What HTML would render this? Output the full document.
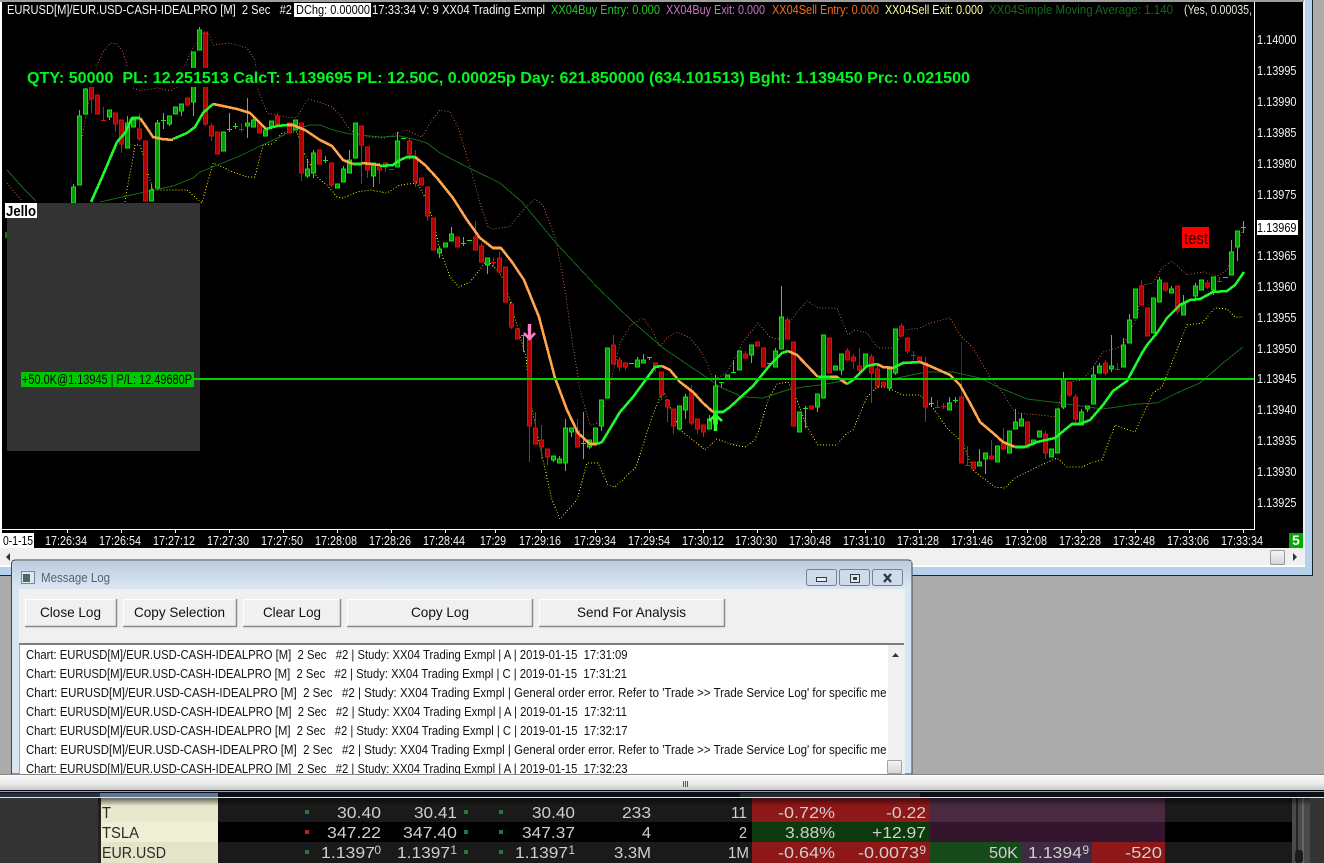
<!DOCTYPE html>
<html><head><meta charset="utf-8"><title>Chart</title>
<style>
html,body{margin:0;padding:0;background:#ababab;width:1324px;height:863px;overflow:hidden}
svg{display:block}
text{font-family:"Liberation Sans",sans-serif;white-space:pre}
.d{fill:none;stroke-width:1;stroke-dasharray:1 2;shape-rendering:crispEdges}
.e{fill:none;stroke-width:2.6;stroke-linejoin:round;shape-rendering:crispEdges}
.c{shape-rendering:crispEdges}
.ax text{fill:#f2f2f2;font-size:13px}
.log text{fill:#111;font-size:13px}
.t text{fill:#cfcfcf;font-size:16px;text-anchor:end}
.t .s{font-size:12px}
</style></head><body>
<svg xmlns="http://www.w3.org/2000/svg" width="1324" height="863" viewBox="0 0 1324 863">
<defs>
<clipPath id="cc"><rect x="2" y="18" width="1252" height="511"/></clipPath>
<clipPath id="lc"><rect x="20" y="646" width="867" height="128"/></clipPath>
<linearGradient id="tb" x1="0" y1="0" x2="0" y2="1"><stop offset="0" stop-color="#bccddf"/><stop offset="1" stop-color="#dce8f4"/></linearGradient>
<linearGradient id="bt" x1="0" y1="0" x2="0" y2="1"><stop offset="0" stop-color="#f6f6f6"/><stop offset="1" stop-color="#d4d4d4"/></linearGradient>
<linearGradient id="hs" x1="0" y1="0" x2="0" y2="1"><stop offset="0" stop-color="#fbfbfb"/><stop offset=".55" stop-color="#ececec"/><stop offset="1" stop-color="#c4c4c4"/></linearGradient>
<linearGradient id="sh" x1="0" y1="0" x2="0" y2="1"><stop offset="0" stop-color="#000" stop-opacity=".55"/><stop offset="1" stop-color="#000" stop-opacity="0"/></linearGradient>
</defs>

<!-- window background -->
<rect width="1324" height="863" fill="#ababab"/>
<rect x="0" y="0" width="1313" height="576" fill="#b5d1ec"/>
<rect x="1312" y="0" width="1" height="576" fill="#222"/>
<rect x="0" y="575" width="1313" height="1" fill="#222"/>
<rect x="0" y="0" width="1305" height="567" fill="#f0f0f0"/>
<rect x="0" y="565" width="1305" height="2" fill="#fff"/>
<rect x="0" y="0" width="1304" height="2" fill="#9e9e9e"/>
<rect x="2" y="2" width="1301" height="546" fill="#000"/>
<rect x="0" y="2" width="2" height="546" fill="#fff"/>

<!-- bottom scroll of chart window -->
<rect x="1270.500" y="550.500" width="14" height="14" fill="url(#bt)" stroke="#9a9a9a" rx="1"/>
<path d="M1293 553l4 4-4 4z" fill="#333"/>
<path d="M10 553l-4 4 4 4z" fill="#333"/>

<!-- chart -->
<g clip-path="url(#cc)">
<g class="d" stroke="#b25c3a">
<polyline points="7,183 21,200"/>
<polyline points="81,145 85,120 90,95 97,66 103,52 110,43 117,44 122,50 127,65 133,88 141,91 150,89 158,88 170,91 177,87 185,65 193,48 203,32 208,32 213,45 230,43 247,48 255,60 258,90 267,113 290,118 297,117 308,99 319,102 332,107 340,115 350,130 365,137 385,138 406,130 422,137 432,120 440,110 450,112 458,127 473,177 480,203 488,227 492,229 500,228 509,227 526,207 535,199 543,205 556,240 565,290 572,340 580,390 590,425 600,423 610,385 620,343 631,325 643,318 652,330 660,347 667,338 677,332 690,338 700,350 707,363 713,380 727,373 743,342 758,323 770,337 778,339 797,312 807,301 818,308 837,308 848,335 855,330 867,333 878,348 893,348 905,330 920,328 930,323 950,318 960,335 973,348 990,377 1003,393 1015,413 1030,414 1057,417 1063,383 1083,380 1093,367 1103,352 1123,346 1137,317 1143,285 1153,283 1162,268 1172,261 1187,275 1203,272 1217,276 1227,270 1235,247 1243,230"/>
</g>
<g class="d" stroke="#e6e600">
<polyline points="125,202 135,145 140,145 150,180 153,190 187,190 202,203 213,163 233,172 247,177 255,177 263,145 273,144 282,133 297,132 305,155 317,177 327,185 337,197 343,198 357,192 370,190 387,193 400,185 417,183 425,197 433,220 440,250 450,277 459,287 470,282 487,260 500,273 505,283 526,357 530,400 543,460 552,500 560,519 577,500 587,463 598,463 608,485 615,487 636,467 652,417 663,390 680,430 693,440 705,450 717,439 730,444 745,447 755,440 760,427 768,400 777,384 788,382 797,400 807,427 818,445 837,445 845,435 853,430 867,397 877,387 887,387 902,395 920,395 933,408 947,428 963,443 973,470 983,478 995,487 1005,488 1015,478 1037,467 1057,458 1067,467 1082,467 1093,462 1102,460 1115,425 1135,432 1153,393 1162,387 1187,325 1202,323 1215,308 1227,309 1235,317 1243,317"/>
</g>
<g fill="none" stroke="#126a18" stroke-width="1" class="c">
<polyline points="7,170 25,190 36,201"/>
<polyline points="100,202 140,193 173,186 193,178 200,172 220,164 240,156 260,146 280,137 293,130 310,125 320,125 333,130 350,134 380,137 400,136 417,140 427,143 440,153 467,167 490,178 500,183 522,202 556,243 597,287 633,322 663,348 703,375 720,387 743,397 763,398 787,390 803,387 820,385 837,382 853,379 887,380 907,376 927,372 953,372 980,378 1000,388 1027,399 1060,403 1103,409 1137,404 1157,403 1177,393 1200,383 1223,363 1243,347"/>
</g>
<!-- wicks -->
<path class="c" fill="none" stroke="#10f010" stroke-width="1" d="M73.5 184V203M79.5 110V185M85.5 88V114M109.5 110V120M127.5 116V148M133.5 118V127M151.5 184V201M157.5 120V188M169.5 116V126M181.5 104V116M193.5 52V116M199.5 27V50M247.5 98V138M253.5 115V127M265.5 127V136M307.5 160V178M313.5 150V178M343.5 166V182M349.5 150V173M373.5 163V187M397.5 132V167M439.5 246V258M451.5 227V241M487.5 258V274M553.5 456V462M559.5 456V463M565.5 419V471M571.5 428V437M589.5 440V449M601.5 400V431M637.5 357V367M643.5 354V363M685.5 394V419M709.5 415V429M715.5 375V430M751.5 345V363M775.5 348V367M781.5 286V349M817.5 394V412M841.5 354V375M865.5 354V367M889.5 366V391M895.5 329V375M949.5 397V410M979.5 449V466M985.5 453V474M1015.5 409V429M1021.5 413V426M1063.5 372V409M1081.5 409V425M1087.5 406V412M1093.5 366V404M1099.5 363V373M1111.5 335V372M1123.5 338V367M1129.5 314V343M1159.5 277V302M1171.5 286V293M1183.5 295V315M1195.5 283V298M1213.5 277V295M1231.5 240V275M1237.5 231V261
M163.5 113V129M161 120.5h5M229.5 113V132M227 129.5h5M235.5 123V129M233 126.5h5M325.5 156V163M323 160.5h5M401 138.5h5M463.5 237V246M461 243.5h5M467 240.5h5M523.5 335V352M521 335.5h5M583.5 412V459M581 443.5h5M629 363.5h5M649.5 357V360M647 357.5h5M721.5 382V387M719 382.5h5M733.5 360V372M731 372.5h5M769.5 363V367M767 363.5h5M805.5 406V428M803 408.5h5M931.5 397V406M929 403.5h5M955.5 397V403M953 400.5h5M1223 277.5h5M1243.5 221V233M1241 227.5h5"/>
<path class="c" fill="none" stroke="#ff0000" stroke-width="1" d="M91.5 87V113M115.5 113V132M121.5 120V153M139.5 113V141M145.5 141V201M205.5 33V126M211.5 123V141M277.5 113V124M301.5 123V181M331.5 163V187M361.5 126V184M367.5 147V178M379.5 163V184M385.5 163V172M409.5 138V160M415.5 150V187M427.5 187V221M475.5 221V250M481.5 243V262M499.5 252V274M511.5 301V329M529.5 338V462M535.5 412V444M541.5 425V459M547.5 449V465M577.5 419V447M613.5 335V364M619.5 357V371M625.5 363V370M655.5 363V372M661.5 372V400M667.5 400V422M673.5 409V434M691.5 385V425M697.5 419V434M703.5 425V437M745.5 351V358M787.5 317V339M847.5 348V360M853.5 354V369M859.5 348V372M871.5 354V403M877.5 366V388M901.5 323V336M907.5 338V354M925.5 357V422M973.5 462V469M991.5 440V459M1003.5 428V449M1027.5 422V449M1045.5 431V459M1069.5 382V397M1075.5 394V422M1105.5 360V375M1141.5 280V305M1165.5 283V292M1177.5 286V314M1207.5 280V289
M103.5 107V120M101 120.5h5M241.5 123V132M239 129.5h5M389 169.5h5M493.5 258V267M491 262.5h5M913.5 351V360M911 355.5h5M937.5 400V407M935 407.5h5M943.5 403V409M941 406.5h5M967.5 446V465M965 465.5h5M1117.5 363V369M1115 369.5h5M1219.5 277V281M1217 281.5h5"/>
<path class="c" fill="none" stroke="#8c1010" stroke-width="1" d="M961.5 342V397"/>
<!-- green bodies -->
<path class="c" fill="#00a000" stroke="#00f000" stroke-width="1" d="M71.5 187h4v16h-4zM77.5 116h4v69h-4zM83.5 89h4v25h-4zM107.5 110h4v7h-4zM125.5 123h4v25h-4zM131.5 120h4v7h-4zM149.5 190h4v11h-4zM155.5 123h4v65h-4zM167.5 116h4v8h-4zM173.5 107h4v7h-4zM179.5 104h4v7h-4zM191.5 52h4v50h-4zM197.5 30h4v20h-4zM221.5 132h4v19h-4zM245.5 123h4v3h-4zM251.5 120h4v7h-4zM263.5 130h4v6h-4zM269.5 121h4v6h-4zM293.5 120h4v10h-4zM305.5 169h4v7h-4zM311.5 153h4v20h-4zM335.5 184h4v4h-4zM341.5 169h4v13h-4zM347.5 160h4v13h-4zM353.5 123h4v35h-4zM371.5 163h4v13h-4zM395.5 141h4v26h-4zM437.5 249h4v4h-4zM443.5 243h4v4h-4zM449.5 234h4v7h-4zM485.5 258h4v7h-4zM551.5 456h4v4h-4zM557.5 459h4v4h-4zM563.5 428h4v35h-4zM569.5 428h4v4h-4zM587.5 440h4v7h-4zM593.5 428h4v16h-4zM599.5 400h4v26h-4zM605.5 348h4v50h-4zM635.5 360h4v7h-4zM641.5 360h4v3h-4zM677.5 406h4v23h-4zM683.5 397h4v13h-4zM707.5 419h4v10h-4zM713.5 386h4v38h-4zM725.5 375h4v4h-4zM737.5 351h4v19h-4zM749.5 345h4v10h-4zM773.5 351h4v16h-4zM779.5 317h4v32h-4zM797.5 412h4v20h-4zM815.5 394h4v13h-4zM821.5 335h4v63h-4zM833.5 366h4v4h-4zM839.5 354h4v16h-4zM863.5 354h4v13h-4zM887.5 369h4v19h-4zM893.5 329h4v44h-4zM947.5 403h4v7h-4zM977.5 462h4v4h-4zM983.5 453h4v6h-4zM995.5 446h4v16h-4zM1007.5 431h4v22h-4zM1013.5 422h4v7h-4zM1019.5 419h4v7h-4zM1031.5 440h4v3h-4zM1037.5 431h4v6h-4zM1049.5 449h4v8h-4zM1055.5 409h4v44h-4zM1061.5 379h4v28h-4zM1079.5 412h4v13h-4zM1085.5 406h4v3h-4zM1091.5 375h4v29h-4zM1097.5 366h4v7h-4zM1109.5 366h4v3h-4zM1121.5 345h4v22h-4zM1127.5 320h4v23h-4zM1133.5 289h4v29h-4zM1151.5 298h4v35h-4zM1157.5 280h4v22h-4zM1169.5 289h4v4h-4zM1181.5 304h4v11h-4zM1193.5 286h4v10h-4zM1199.5 280h4v10h-4zM1211.5 277h4v13h-4zM1229.5 252h4v23h-4zM1235.5 231h4v16h-4z"/>
<!-- red bodies -->
<path class="c" fill="#b00000" stroke="#ff0000" stroke-width="1" d="M89.5 87h4v12h-4zM95.5 95h4v19h-4zM113.5 113h4v11h-4zM119.5 120h4v24h-4zM137.5 129h4v10h-4zM143.5 141h4v60h-4zM185.5 98h4v7h-4zM203.5 33h4v91h-4zM209.5 126h4v10h-4zM215.5 132h4v22h-4zM257.5 123h4v10h-4zM275.5 116h4v8h-4zM287.5 123h4v10h-4zM299.5 123h4v50h-4zM317.5 150h4v14h-4zM329.5 163h4v22h-4zM359.5 126h4v19h-4zM365.5 147h4v23h-4zM377.5 166h4v4h-4zM383.5 163h4v4h-4zM407.5 141h4v13h-4zM413.5 157h4v25h-4zM419.5 178h4v7h-4zM425.5 187h4v29h-4zM431.5 218h4v32h-4zM455.5 237h4v10h-4zM473.5 237h4v13h-4zM479.5 246h4v16h-4zM497.5 258h4v14h-4zM503.5 267h4v35h-4zM509.5 304h4v23h-4zM515.5 329h4v10h-4zM527.5 338h4v88h-4zM533.5 428h4v16h-4zM539.5 440h4v7h-4zM545.5 449h4v8h-4zM575.5 431h4v16h-4zM611.5 345h4v19h-4zM617.5 360h4v7h-4zM623.5 363h4v4h-4zM653.5 363h4v4h-4zM659.5 372h4v23h-4zM665.5 400h4v7h-4zM671.5 409h4v17h-4zM689.5 391h4v32h-4zM695.5 419h4v10h-4zM701.5 425h4v7h-4zM743.5 354h4v4h-4zM755.5 342h4v4h-4zM761.5 348h4v19h-4zM785.5 320h4v19h-4zM791.5 342h4v84h-4zM809.5 406h4v3h-4zM827.5 338h4v35h-4zM845.5 351h4v9h-4zM851.5 357h4v4h-4zM857.5 366h4v4h-4zM869.5 357h4v16h-4zM875.5 369h4v17h-4zM881.5 382h4v4h-4zM899.5 326h4v10h-4zM905.5 338h4v13h-4zM917.5 357h4v4h-4zM923.5 363h4v44h-4zM959.5 397h4v66h-4zM971.5 462h4v7h-4zM989.5 456h4v3h-4zM1001.5 443h4v6h-4zM1025.5 422h4v25h-4zM1043.5 434h4v19h-4zM1067.5 382h4v13h-4zM1073.5 397h4v22h-4zM1103.5 363h4v10h-4zM1139.5 286h4v19h-4zM1145.5 308h4v28h-4zM1163.5 283h4v7h-4zM1175.5 286h4v25h-4zM1205.5 283h4v4h-4z"/>
<!-- EMA -->
<g class="e" stroke="#ffa64d">
<polyline points="140,118 147,128 153,137 162,139 173,140"/>
<polyline points="213,104 223,106 237,109 250,113 257,120 266,129"/>
<polyline points="287,125 293,125 305,130 320,140 332,146 343,160 353,164"/>
<polyline points="362,163 380,165"/>
<polyline points="415,157 425,165 437,178 453,198 467,220 480,238 493,248 501,248 512,262 524,280 539,317 555,378 567,410 578,433 590,444 597,444"/>
<polyline points="662,366 670,370 680,382 693,392 703,403 713,412"/>
<polyline points="788,351 797,355 818,377"/>
<polyline points="830,377 837,377 847,384"/>
<polyline points="877,364 883,367 893,368"/>
<polyline points="920,362 930,366 950,375 960,385 970,403 980,422 993,433 1003,442 1015,447"/>
</g>
<g class="e" stroke="#1cf82c">
<polyline points="91,202 103,175 117,142 125,133 132,118 140,118"/>
<polyline points="173,139 187,133 195,127 203,113 213,104"/>
<polyline points="266,129 277,126 287,125"/>
<polyline points="353,164 362,164"/>
<polyline points="380,166 393,165 400,160 407,157 415,157"/>
<polyline points="597,444 602,442 620,412 633,397 647,378 655,367 662,366"/>
<polyline points="713,412 723,412 730,407 743,395 753,386 770,365 782,353 788,351"/>
<polyline points="818,377 830,377"/>
<polyline points="847,384 853,380 867,366 877,364"/>
<polyline points="893,368 903,363 920,362"/>
<polyline points="1015,447 1025,447 1037,442 1055,438 1067,428 1072,424 1080,424 1090,420 1103,405 1113,391 1127,381 1142,353 1147,345 1157,333 1167,318 1180,305 1190,300 1200,299 1213,292 1227,291 1235,285 1244,272"/>
</g>
<!-- arrows -->
<path d="M529.500 324V337" stroke="#ff80c0" stroke-width="3.400" fill="none"/>
<path d="M524 333l5.500 6 5.500-6" stroke="#ff80c0" stroke-width="2.600" fill="none"/>
<path d="M715.500 431V417" stroke="#30ff30" stroke-width="3.400" fill="none"/>
<path d="M709 421l6.500-6 6.500 6" stroke="#30ff30" stroke-width="2.600" fill="none"/>
</g>

<!-- info text -->
<rect x="27" y="68" width="943" height="19" fill="#000"/>
<text x="27" y="83" font-size="16" font-weight="700" fill="#00f81c" textLength="943" lengthAdjust="spacingAndGlyphs">QTY: 50000  PL: 12.251513 CalcT: 1.139695 PL: 12.50C, 0.00025p Day: 621.850000 (634.101513) Bght: 1.139450 Prc: 0.021500</text>

<!-- position line -->
<rect x="7" y="203" width="193" height="248" fill="#333"/>
<rect x="193" y="378" width="1061" height="2" fill="#00d000"/>
<rect x="21" y="372" width="173" height="15" fill="#00c800"/>
<text x="22" y="384" font-size="14" fill="#000" textLength="170" lengthAdjust="spacingAndGlyphs">+50.0K@1.13945 | P/L: 12.49680P</text>
<rect x="5" y="203" width="32" height="15" fill="#fff"/>
<text x="6" y="216" font-size="15" font-weight="700" fill="#000" textLength="30" lengthAdjust="spacingAndGlyphs">Jello</text>
<rect x="5" y="232" width="2" height="6" fill="#0a7a0a"/>

<rect x="1182" y="227" width="27" height="21" fill="#ff0000"/>
<text x="1184" y="244" font-size="17" fill="#200" textLength="24" lengthAdjust="spacingAndGlyphs">test</text>

<!-- legend -->
<g font-size="13">
<text x="7" y="14" fill="#f4f4f4" textLength="285" lengthAdjust="spacingAndGlyphs">EURUSD[M]/EUR.USD-CASH-IDEALPRO [M]  2 Sec   #2</text>
<rect x="294" y="3" width="77" height="14" fill="#fff"/>
<text x="296" y="14" fill="#000" textLength="74" lengthAdjust="spacingAndGlyphs">DChg: 0.00000</text>
<text x="372" y="14" fill="#f4f4f4" textLength="173" lengthAdjust="spacingAndGlyphs">17:33:34 V: 9 XX04 Trading Exmpl</text>
<text x="551" y="14" fill="#22c822" textLength="109" lengthAdjust="spacingAndGlyphs">XX04Buy Entry: 0.000</text>
<text x="666" y="14" fill="#d070c8" textLength="99" lengthAdjust="spacingAndGlyphs">XX04Buy Exit: 0.000</text>
<text x="772" y="14" fill="#ff6a1a" textLength="107" lengthAdjust="spacingAndGlyphs">XX04Sell Entry: 0.000</text>
<text x="885" y="14" fill="#ffff9a" textLength="98" lengthAdjust="spacingAndGlyphs">XX04Sell Exit: 0.000</text>
<text x="989" y="14" fill="#126a18" textLength="184" lengthAdjust="spacingAndGlyphs">XX04Simple Moving Average: 1.140</text>
<text x="1184" y="14" fill="#ece8d8" textLength="68" lengthAdjust="spacingAndGlyphs">(Yes, 0.00035,</text>
</g>

<!-- axes -->
<rect x="1254" y="2" width="1" height="528" fill="#fff"/>
<rect x="2" y="529" width="1253" height="1" fill="#fff"/>
<g class="ax">
<text x="1257" y="44" textLength="39.500" lengthAdjust="spacingAndGlyphs">1.14000</text>
<text x="1257" y="75" textLength="39.500" lengthAdjust="spacingAndGlyphs">1.13995</text>
<text x="1257" y="106" textLength="39.500" lengthAdjust="spacingAndGlyphs">1.13990</text>
<text x="1257" y="137" textLength="39.500" lengthAdjust="spacingAndGlyphs">1.13985</text>
<text x="1257" y="168" textLength="39.500" lengthAdjust="spacingAndGlyphs">1.13980</text>
<text x="1257" y="199" textLength="39.500" lengthAdjust="spacingAndGlyphs">1.13975</text>
<text x="1257" y="260" textLength="39.500" lengthAdjust="spacingAndGlyphs">1.13965</text>
<text x="1257" y="291" textLength="39.500" lengthAdjust="spacingAndGlyphs">1.13960</text>
<text x="1257" y="322" textLength="39.500" lengthAdjust="spacingAndGlyphs">1.13955</text>
<text x="1257" y="353" textLength="39.500" lengthAdjust="spacingAndGlyphs">1.13950</text>
<text x="1257" y="383" textLength="39.500" lengthAdjust="spacingAndGlyphs">1.13945</text>
<text x="1257" y="414" textLength="39.500" lengthAdjust="spacingAndGlyphs">1.13940</text>
<text x="1257" y="445" textLength="39.500" lengthAdjust="spacingAndGlyphs">1.13935</text>
<text x="1257" y="476" textLength="39.500" lengthAdjust="spacingAndGlyphs">1.13930</text>
<text x="1257" y="507" textLength="39.500" lengthAdjust="spacingAndGlyphs">1.13925</text>
<rect x="1257" y="220" width="41" height="15" fill="#fff"/>
<text x="1257" y="232" style="fill:#000" textLength="39.500" lengthAdjust="spacingAndGlyphs">1.13969</text>
</g>
<path stroke="#fff" stroke-width="1" class="c" d="M67.500 530v3M121.500 530v3M175.500 530v3M229.500 530v3M283.500 530v3M337.500 530v3M391.500 530v3M445.500 530v3M495.500 530v3M541.500 530v3M595.500 530v3M649.500 530v3M703.500 530v3M757.500 530v3M811.500 530v3M865.500 530v3M919.500 530v3M973.500 530v3M1027.500 530v3M1081.500 530v3M1135.500 530v3M1189.500 530v3M1243.500 530v3"/>
<g class="ax">
<rect x="2" y="533" width="32" height="15" fill="#fff"/>
<text x="3" y="545" style="fill:#000" textLength="30" lengthAdjust="spacingAndGlyphs">0-1-15</text>
<text x="45" y="545" textLength="42" lengthAdjust="spacingAndGlyphs">17:26:34</text>
<text x="99" y="545" textLength="42" lengthAdjust="spacingAndGlyphs">17:26:54</text>
<text x="153" y="545" textLength="42" lengthAdjust="spacingAndGlyphs">17:27:12</text>
<text x="207" y="545" textLength="42" lengthAdjust="spacingAndGlyphs">17:27:30</text>
<text x="261" y="545" textLength="42" lengthAdjust="spacingAndGlyphs">17:27:50</text>
<text x="315" y="545" textLength="42" lengthAdjust="spacingAndGlyphs">17:28:08</text>
<text x="369" y="545" textLength="42" lengthAdjust="spacingAndGlyphs">17:28:26</text>
<text x="423" y="545" textLength="42" lengthAdjust="spacingAndGlyphs">17:28:44</text>
<text x="480" y="545" textLength="26" lengthAdjust="spacingAndGlyphs">17:29</text>
<text x="519" y="545" textLength="42" lengthAdjust="spacingAndGlyphs">17:29:16</text>
<text x="574" y="545" textLength="42" lengthAdjust="spacingAndGlyphs">17:29:34</text>
<text x="628" y="545" textLength="42" lengthAdjust="spacingAndGlyphs">17:29:54</text>
<text x="682" y="545" textLength="42" lengthAdjust="spacingAndGlyphs">17:30:12</text>
<text x="735" y="545" textLength="42" lengthAdjust="spacingAndGlyphs">17:30:30</text>
<text x="789" y="545" textLength="42" lengthAdjust="spacingAndGlyphs">17:30:48</text>
<text x="843" y="545" textLength="42" lengthAdjust="spacingAndGlyphs">17:31:10</text>
<text x="897" y="545" textLength="42" lengthAdjust="spacingAndGlyphs">17:31:28</text>
<text x="951" y="545" textLength="42" lengthAdjust="spacingAndGlyphs">17:31:46</text>
<text x="1005" y="545" textLength="42" lengthAdjust="spacingAndGlyphs">17:32:08</text>
<text x="1059" y="545" textLength="42" lengthAdjust="spacingAndGlyphs">17:32:28</text>
<text x="1113" y="545" textLength="42" lengthAdjust="spacingAndGlyphs">17:32:48</text>
<text x="1167" y="545" textLength="42" lengthAdjust="spacingAndGlyphs">17:33:06</text>
<text x="1221" y="545" textLength="42" lengthAdjust="spacingAndGlyphs">17:33:34</text>
</g>
<rect x="1289" y="533" width="14" height="15" fill="#00a800"/>
<text x="1292" y="545" font-size="14" font-weight="700" fill="#fff">5</text>

<!-- Message log window -->
<path d="M11.500 774V564q0-4 4-4H908q4 0 4 4V774z" fill="#d8e5f2" stroke="#444" stroke-width="1"/>
<rect x="12.500" y="561" width="899" height="29" fill="url(#tb)"/>
<rect x="19" y="589" width="886" height="185" fill="#f0f0f0"/>
<rect x="21.500" y="571.500" width="13" height="12" fill="#dfe6ee" stroke="#7b8794"/>
<rect x="23" y="574" width="7" height="8" fill="#4a6a6a"/>
<text x="41" y="582" font-size="13" fill="#55616e" textLength="69" lengthAdjust="spacingAndGlyphs">Message Log</text>
<g fill="#cfdbe8" stroke="#75828f">
<rect x="806.500" y="569.500" width="30" height="16" rx="2"/>
<rect x="839.500" y="569.500" width="30" height="16" rx="2"/>
<rect x="872.500" y="569.500" width="30" height="16" rx="2"/>
</g>
<rect x="816.500" y="577.500" width="10" height="4" fill="#e8eef4" stroke="#2f3b47"/>
<rect x="850.500" y="574.500" width="9" height="8" fill="#dfe7ef" stroke="#2f3b47"/>
<rect x="853" y="577" width="4" height="3" fill="#2f3b47"/>
<path d="M884 574l7 8m0-8l-7 8" stroke="#2f3b47" stroke-width="2.400" fill="none"/>

<!-- buttons -->
<g fill="#f0f0f0">
<rect x="25" y="599" width="92" height="28"/>
<rect x="123" y="599" width="114" height="28"/>
<rect x="243" y="599" width="98" height="28"/>
<rect x="347" y="599" width="186" height="28"/>
<rect x="539" y="599" width="186" height="28"/>
</g>
<g fill="none" stroke="#fff"><path d="M25.500 626V599.500H116M123.500 626V599.500H236M243.500 626V599.500H340M347.500 626V599.500H532M539.500 626V599.500H724"/></g>
<g fill="none" stroke="#8a8a8a" stroke-width="1.500"><path d="M25 626.500H116.500V599M123 626.500H236.500V599M243 626.500H340.500V599M347 626.500H532.500V599M539 626.500H724.500V599"/></g>
<g font-size="14" fill="#111">
<text x="40" y="617" textLength="61" lengthAdjust="spacingAndGlyphs">Close Log</text>
<text x="134" y="617" textLength="91" lengthAdjust="spacingAndGlyphs">Copy Selection</text>
<text x="263" y="617" textLength="58" lengthAdjust="spacingAndGlyphs">Clear Log</text>
<text x="411" y="617" textLength="58" lengthAdjust="spacingAndGlyphs">Copy Log</text>
<text x="577" y="617" textLength="109" lengthAdjust="spacingAndGlyphs">Send For Analysis</text>
</g>

<!-- log list -->
<rect x="20" y="644" width="883" height="130" fill="#fff"/>
<rect x="19" y="643" width="885" height="2" fill="#7d7d7d"/>
<rect x="19" y="645" width="1" height="129" fill="#a8a8a8"/>
<rect x="888" y="645" width="15" height="129" fill="#f0f0f0"/>
<path d="M892 657l3.500-4 3.500 4z" fill="#333"/>
<rect x="887.500" y="760.500" width="14" height="13" fill="url(#bt)" stroke="#a2a2a2" rx="1"/>
<g class="log" clip-path="url(#lc)">
<text x="26" y="659" textLength="601.500" lengthAdjust="spacingAndGlyphs">Chart: EURUSD[M]/EUR.USD-CASH-IDEALPRO [M]  2 Sec   #2 | Study: XX04 Trading Exmpl | A | 2019-01-15  17:31:09</text>
<text x="26" y="678" textLength="601" lengthAdjust="spacingAndGlyphs">Chart: EURUSD[M]/EUR.USD-CASH-IDEALPRO [M]  2 Sec   #2 | Study: XX04 Trading Exmpl | C | 2019-01-15  17:31:21</text>
<text x="26" y="697" textLength="860.500" lengthAdjust="spacingAndGlyphs">Chart: EURUSD[M]/EUR.USD-CASH-IDEALPRO [M]  2 Sec   #2 | Study: XX04 Trading Exmpl | General order error. Refer to 'Trade &gt;&gt; Trade Service Log' for specific me</text>
<text x="26" y="716" textLength="601" lengthAdjust="spacingAndGlyphs">Chart: EURUSD[M]/EUR.USD-CASH-IDEALPRO [M]  2 Sec   #2 | Study: XX04 Trading Exmpl | A | 2019-01-15  17:32:11</text>
<text x="26" y="735" textLength="601.500" lengthAdjust="spacingAndGlyphs">Chart: EURUSD[M]/EUR.USD-CASH-IDEALPRO [M]  2 Sec   #2 | Study: XX04 Trading Exmpl | C | 2019-01-15  17:32:17</text>
<text x="26" y="754" textLength="860.500" lengthAdjust="spacingAndGlyphs">Chart: EURUSD[M]/EUR.USD-CASH-IDEALPRO [M]  2 Sec   #2 | Study: XX04 Trading Exmpl | General order error. Refer to 'Trade &gt;&gt; Trade Service Log' for specific me</text>
<text x="26" y="773" textLength="601.500" lengthAdjust="spacingAndGlyphs">Chart: EURUSD[M]/EUR.USD-CASH-IDEALPRO [M]  2 Sec   #2 | Study: XX04 Trading Exmpl | A | 2019-01-15  17:32:23</text>
</g>

<!-- horizontal scrollbar -->
<rect x="0" y="774" width="1324" height="17" fill="url(#hs)"/>
<rect x="0" y="774" width="1324" height="1" fill="#888"/>
<rect x="4" y="775" width="1320" height="1" fill="#fff"/>
<path d="M683.500 781v6M685.500 781v6M687.500 781v6" stroke="#555" stroke-width="1"/>
<rect x="0" y="790" width="1324" height="8" fill="#0a0f18"/>
<rect x="0" y="791" width="1324" height="1" fill="#9aa0a6"/>
<rect x="0" y="793" width="218" height="4" fill="#26323e"/>
<rect x="100" y="793" width="118" height="4" fill="#5d7794"/>
<rect x="740" y="793" width="180" height="4" fill="#1e2c30"/>
<rect x="0" y="797" width="1324" height="1" fill="#dfe3e8"/>

<!-- bottom table -->
<rect x="0" y="798" width="1324" height="65" fill="#333"/>
<rect x="98" y="798" width="1212" height="65" fill="#1a1a1a"/>
<rect x="98" y="822" width="1194" height="20" fill="#000"/>
<rect x="98" y="798" width="3" height="65" fill="#222"/>
<rect x="101" y="798" width="117" height="24" fill="#e8e8cc"/>
<rect x="101" y="822" width="117" height="20" fill="#efefd5"/>
<rect x="101" y="842" width="117" height="21" fill="#e4e4c8"/>
<rect x="752" y="798" width="178" height="24" fill="#8e1717"/>
<rect x="752" y="822" width="178" height="20" fill="#0c3a0c"/>
<rect x="752" y="842" width="178" height="21" fill="#8e1717"/>
<rect x="930" y="798" width="235" height="24" fill="#4a2a40"/>
<rect x="930" y="822" width="235" height="20" fill="#35152e"/>
<rect x="930" y="842" width="92" height="21" fill="#174a1a"/>
<rect x="1022" y="842" width="70" height="21" fill="#3f2a44"/>
<rect x="1092" y="842" width="73" height="21" fill="#8e1717"/>
<rect x="1292" y="798" width="18" height="65" fill="#4a4a4a"/>
<rect x="1296" y="798" width="2" height="65" fill="#222"/>
<rect x="1302" y="798" width="2" height="65" fill="#666"/>
<rect x="1295" y="850" width="8" height="13" fill="#1c1c1c" rx="3"/>
<rect x="98" y="798" width="1212" height="8" fill="url(#sh)"/>
<g font-size="16" fill="#2a2a2a">
<text x="102" y="818" textLength="9" lengthAdjust="spacingAndGlyphs">T</text>
<text x="102" y="838" textLength="37" lengthAdjust="spacingAndGlyphs">TSLA</text>
<text x="102" y="858" textLength="64" lengthAdjust="spacingAndGlyphs">EUR.USD</text>
</g>
<g fill="#1f7a3a">
<rect x="305" y="810" width="4" height="4"/><rect x="464" y="810" width="4" height="4"/><rect x="499" y="810" width="4" height="4"/>
<rect x="464" y="830" width="4" height="4"/><rect x="499" y="830" width="4" height="4"/>
<rect x="305" y="850" width="4" height="4"/><rect x="464" y="850" width="4" height="4"/><rect x="499" y="850" width="4" height="4"/>
</g>
<rect x="305" y="830" width="4" height="4" fill="#d01818"/>
<g class="t">
<text x="381" y="818" textLength="44" lengthAdjust="spacingAndGlyphs">30.40</text>
<text x="457" y="818" textLength="43" lengthAdjust="spacingAndGlyphs">30.41</text>
<text x="575" y="818" textLength="43" lengthAdjust="spacingAndGlyphs">30.40</text>
<text x="651" y="818" textLength="29" lengthAdjust="spacingAndGlyphs">233</text>
<text x="747" y="818" textLength="16" lengthAdjust="spacingAndGlyphs">11</text>
<text x="835" y="818" textLength="57" lengthAdjust="spacingAndGlyphs">-0.72%</text>
<text x="926" y="818" textLength="40" lengthAdjust="spacingAndGlyphs">-0.22</text>
<text x="381" y="838" textLength="54" lengthAdjust="spacingAndGlyphs">347.22</text>
<text x="457" y="838" textLength="54" lengthAdjust="spacingAndGlyphs">347.40</text>
<text x="575" y="838" textLength="53" lengthAdjust="spacingAndGlyphs">347.37</text>
<text x="651" y="838" textLength="9" lengthAdjust="spacingAndGlyphs">4</text>
<text x="747" y="838" textLength="8" lengthAdjust="spacingAndGlyphs">2</text>
<text x="835" y="838" textLength="50" lengthAdjust="spacingAndGlyphs">3.88%</text>
<text x="926" y="838" textLength="54" lengthAdjust="spacingAndGlyphs">+12.97</text>
<text x="375" y="858" textLength="54" lengthAdjust="spacingAndGlyphs">1.1397</text><text class="s" x="381" y="854">0</text>
<text x="450" y="858" textLength="53" lengthAdjust="spacingAndGlyphs">1.1397</text><text class="s" x="457" y="854">1</text>
<text x="568" y="858" textLength="53" lengthAdjust="spacingAndGlyphs">1.1397</text><text class="s" x="575" y="854">1</text>
<text x="651" y="858" textLength="37" lengthAdjust="spacingAndGlyphs">3.3M</text>
<text x="749" y="858" textLength="21" lengthAdjust="spacingAndGlyphs">1M</text>
<text x="835" y="858" textLength="57" lengthAdjust="spacingAndGlyphs">-0.64%</text>
<text x="919" y="858" textLength="61" lengthAdjust="spacingAndGlyphs">-0.0073</text><text class="s" x="926" y="854">9</text>
<text x="1018" y="858" textLength="29" lengthAdjust="spacingAndGlyphs">50K</text>
<text x="1082" y="858" textLength="54" lengthAdjust="spacingAndGlyphs">1.1394</text><text class="s" x="1089" y="854">9</text>
<text x="1162" y="858" textLength="37" lengthAdjust="spacingAndGlyphs">-520</text>
</g>
</svg>
</body></html>
